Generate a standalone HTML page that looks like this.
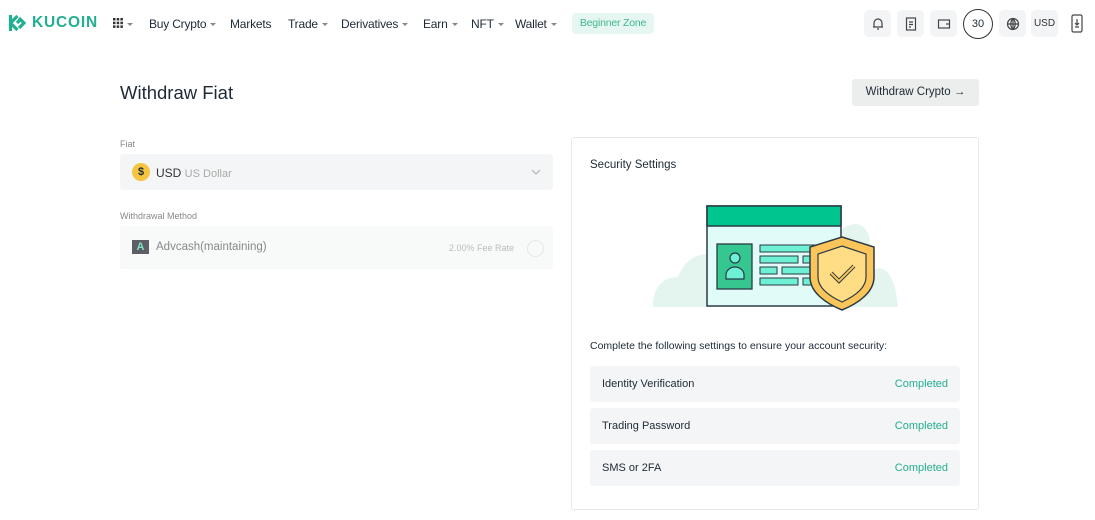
<!DOCTYPE html>
<html><head><meta charset="utf-8"><style>
*{box-sizing:border-box;margin:0;padding:0}
body{width:1095px;height:520px;background:#fff;font-family:"Liberation Sans",sans-serif;color:#1d2a36;position:relative;overflow:hidden}
.a{position:absolute}
.nav{font-size:12px;color:#1d2a36;top:17px;white-space:nowrap;letter-spacing:-0.2px}
.car{display:inline-block;border-left:3px solid transparent;border-right:3px solid transparent;border-top:3px solid #888;margin-left:4px;vertical-align:middle}
.ib{width:27px;height:27px;background:#f3f4f6;border-radius:5px;top:10px;display:flex;align-items:center;justify-content:center}
.row{left:590px;width:370px;height:36px;background:#f4f5f6;border-radius:3px;font-size:11px;display:flex;align-items:center;justify-content:space-between;padding:0 12px}
.row span:last-child{color:#24ae8f}
</style></head><body>
<svg class="a" style="left:8px;top:13px" width="20" height="20" viewBox="0 0 20 20"><path d="M2.5 2v16M2.5 10l7-7M2.5 10l7 7M11 5l5 5-5 5M9 10l2.5-2.5" stroke="#23af91" stroke-width="3.2" fill="none"/></svg>
<div class="a" style="left:32px;top:14px;font-size:15.5px;font-weight:bold;color:#23af91;letter-spacing:0.8px">KUCOIN</div>
<svg class="a" style="left:113px;top:18px" width="10" height="10" viewBox="0 0 10 10" fill="#333"><rect x="0" y="0" width="2.5" height="2.5"/><rect x="3.7" y="0" width="2.5" height="2.5"/><rect x="7.4" y="0" width="2.5" height="2.5"/><rect x="0" y="3.7" width="2.5" height="2.5"/><rect x="3.7" y="3.7" width="2.5" height="2.5"/><rect x="7.4" y="3.7" width="2.5" height="2.5"/><rect x="0" y="7.4" width="2.5" height="2.5"/><rect x="3.7" y="7.4" width="2.5" height="2.5"/><rect x="7.4" y="7.4" width="2.5" height="2.5"/></svg>
<div class="a nav" style="left:123px"><span class="car"></span></div>
<div class="a nav" style="left:149px">Buy Crypto<span class="car"></span></div>
<div class="a nav" style="left:230px">Markets</div>
<div class="a nav" style="left:288px">Trade<span class="car"></span></div>
<div class="a nav" style="left:341px">Derivatives<span class="car"></span></div>
<div class="a nav" style="left:423px">Earn<span class="car"></span></div>
<div class="a nav" style="left:471px">NFT<span class="car"></span></div>
<div class="a nav" style="left:515px">Wallet<span class="car"></span></div>
<div class="a" style="left:572px;top:13px;width:82px;height:21px;background:#e6f7f2;border-radius:4px;color:#3fb68f;font-size:10.5px;line-height:21px;text-align:center;letter-spacing:-0.2px">Beginner Zone</div>
<div class="a ib" style="left:864px"><svg width="14" height="14" viewBox="0 0 14 14" fill="none" stroke="#444" stroke-width="1.2"><path d="M3 10V6a4 4 0 018 0v4H2h10M6 12h2"/></svg></div>
<div class="a ib" style="left:897px"><svg width="12" height="14" viewBox="0 0 12 14" fill="none" stroke="#444" stroke-width="1.2"><rect x="1.5" y="1" width="9" height="12"/><path d="M4 5h4M4 7.5h4M4 10h2"/></svg></div>
<div class="a ib" style="left:930px"><svg width="14" height="12" viewBox="0 0 14 12" fill="none" stroke="#444" stroke-width="1.2"><rect x="1.5" y="2" width="11" height="8"/><path d="M9 6h3"/></svg></div>
<div class="a" style="left:963px;top:9px;width:30px;height:30px;border:1.3px solid #333;border-radius:50%;font-size:11px;text-align:center;line-height:28px">30</div>
<div class="a ib" style="left:999px"><svg width="14" height="14" viewBox="0 0 14 14" fill="none" stroke="#444" stroke-width="1.2"><circle cx="7" cy="7" r="5.5"/><path d="M1.5 7h11M7 1.5v11M7 1.5c-3 3-3 8 0 11M7 1.5c3 3 3 8 0 11"/></svg></div>
<div class="a ib" style="left:1031px;font-size:10px;color:#333">USD</div>
<svg class="a" style="left:1071px;top:14px" width="12" height="19" viewBox="0 0 12 19" fill="none" stroke="#444" stroke-width="1.2"><rect x="1" y="1" width="10" height="17" rx="1.5"/><path d="M6 5v6M4 9l2 2 2-2M4 13h4"/></svg>

<div class="a" style="left:120px;top:82px;font-size:18.5px;color:#1d2a36">Withdraw Fiat</div>
<div class="a" style="left:852px;top:79px;width:127px;height:27px;background:#eceded;border-radius:3px;font-size:11.5px;line-height:27px;text-align:center;color:#1d2a36">Withdraw Crypto &#8594;</div>

<div class="a" style="left:120px;top:139px;font-size:9px;color:#888">Fiat</div>
<div class="a" style="left:120px;top:154px;width:433px;height:36px;background:#f4f5f6;border-radius:3px"></div>
<div class="a" style="left:132px;top:163px;width:18px;height:18px;border-radius:50%;background:#f5c542;font-size:11px;font-weight:bold;text-align:center;line-height:18px">$</div>
<div class="a" style="left:156px;top:166px;font-size:12px;color:#333">USD <span style="color:#aaa;font-size:11px">US Dollar</span></div>
<svg class="a" style="left:531px;top:169px" width="10" height="6" viewBox="0 0 10 6"><path d="M1 1l4 4 4-4" stroke="#aaa" fill="none"/></svg>
<div class="a" style="left:120px;top:211px;font-size:9px;color:#888">Withdrawal Method</div>
<div class="a" style="left:120px;top:226px;width:433px;height:43px;background:#f8f9f9;border-radius:3px"></div>
<div class="a" style="left:132px;top:240px;width:17px;height:14px;background:#5c6066;color:#7de3c0;font-size:11px;font-weight:bold;text-align:center;line-height:14px">A</div>
<div class="a" style="left:156px;top:241px;font-size:11.5px;color:#888">Advcash(maintaining)</div>
<div class="a" style="left:449px;top:243px;font-size:9px;color:#bbb">2.00% Fee Rate</div>
<div class="a" style="left:527px;top:240px;width:17px;height:17px;border:1px solid #e8e8e8;border-radius:50%"></div>

<div class="a" style="left:571px;top:137px;width:408px;height:373px;border:1px solid #e8e8e8;border-radius:3px"></div>
<div class="a" style="left:590px;top:159px;font-size:11.5px;color:#1d2a36">Security Settings</div>
<svg class="a" style="left:640px;top:195px" width="270" height="120" viewBox="0 0 270 120">
<path d="M13 112c0-20 10-30 25-30 10-25 30-25 35-20V112zM230 80c10-15 25-5 28 32H230z" fill="#e4f4ef"/>
<path d="M195 40c20-20 35-10 35 10v62H195z" fill="#e4f4ef"/>
<rect x="67" y="11" width="134" height="100" fill="#e0fbf8" stroke="#2b3a45" stroke-width="1.5"/>
<rect x="67" y="11" width="134" height="20" fill="#00c58e" stroke="#2b3a45" stroke-width="1.5"/>
<rect x="77" y="49" width="35" height="45" fill="#36c68f" stroke="#2b3a45" stroke-width="1.3"/>
<circle cx="95" cy="63" r="5" fill="#6ef0d4" stroke="#2b3a45" stroke-width="1.2"/>
<path d="M86 84v-4a9 8 0 0118 0v4z" fill="#6ef0d4" stroke="#2b3a45" stroke-width="1.2"/>
<g fill="#6ef0d4" stroke="#2b3a45" stroke-width="1"><rect x="120" y="50" width="55" height="7"/><rect x="120" y="61" width="38" height="7"/><rect x="163" y="61" width="15" height="7"/><rect x="120" y="72" width="17" height="7"/><rect x="142" y="72" width="30" height="7"/><rect x="120" y="83" width="38" height="7"/><rect x="163" y="83" width="15" height="7"/></g>
<path d="M202 42l32 10v30c0 15-15 26-32 33-17-7-32-18-32-33V52z" fill="#fbc55a" stroke="#2b3a45" stroke-width="1.5"/>
<path d="M202 51l24 8v23c0 11-11 19-24 25-13-6-24-14-24-25V59z" fill="#ffdd85" stroke="#2b3a45" stroke-width="1.2"/>
<path d="M191 78l8 8 15-15" stroke="#2b3a45" stroke-width="4" fill="none"/><path d="M191 78l8 8 15-15" stroke="#fbc55a" stroke-width="2" fill="none"/>
</svg>
<div class="a" style="left:590px;top:340px;font-size:10.5px;color:#1d2a36">Complete the following settings to ensure your account security:</div>
<div class="a row" style="top:366px"><span>Identity Verification</span><span>Completed</span></div>
<div class="a row" style="top:408px"><span>Trading Password</span><span>Completed</span></div>
<div class="a row" style="top:450px"><span>SMS or 2FA</span><span>Completed</span></div>
</body></html>
